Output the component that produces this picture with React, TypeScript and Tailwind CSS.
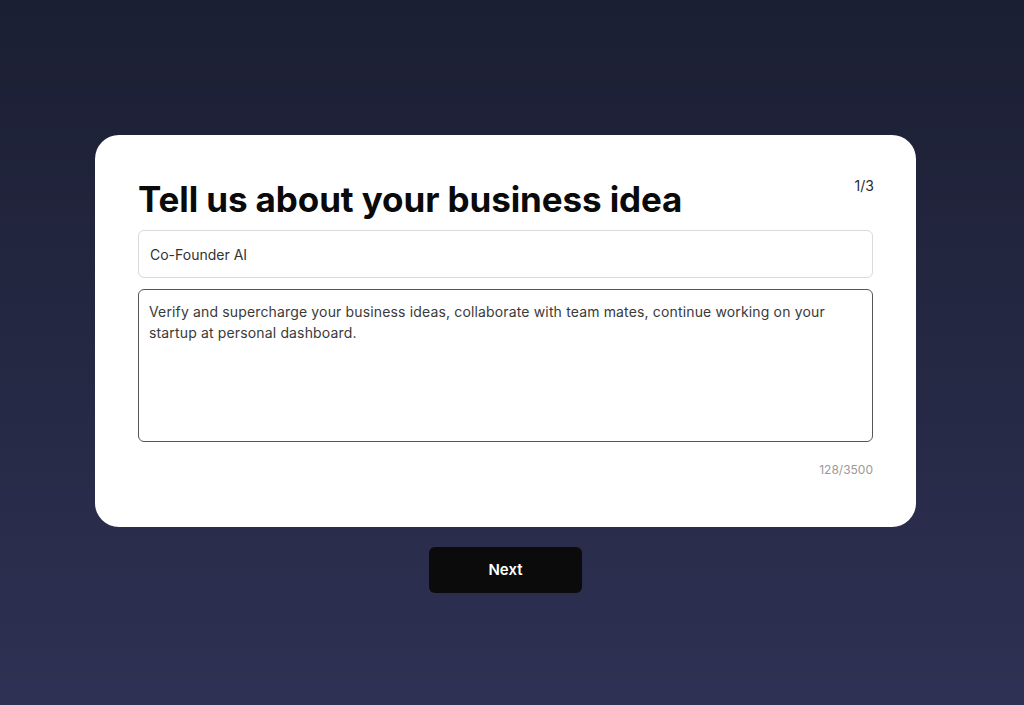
import { useState } from "react";

const font = { fontFamily: "Inter, 'Noto Sans', sans-serif" };

export default function App() {
  const [name, setName] = useState("Co-Founder AI");
  const [desc, setDesc] = useState(
    "Verify and supercharge your business ideas, collaborate with team mates, continue working on your startup at personal dashboard."
  );

  return (
    <div
      style={font}
      className="flex min-h-[705px] w-full flex-col items-center bg-gradient-to-b from-[#1b1f33] to-[#2e3153] pr-[13px] pt-[135px]"
    >
      <div className="w-[821px] rounded-[24px] bg-white px-[43px] pb-[48px] pt-[40px]">
        <div className="flex items-start justify-between">
          <h1 className="text-[35px] font-bold leading-[48px] tracking-[-0.1px] text-[#0a0a0a]">
            Tell us about your business idea
          </h1>
          <span className="mr-[-1px] text-[14px] text-[#2a2a2a]">1/3</span>
        </div>
        <input
          value={name}
          onChange={(e) => setName(e.target.value)}
          className="mt-[7px] block h-[48px] w-full rounded-[6px] border border-[#d9d9d9] px-[11px] text-[14px] text-[#333] outline-none"
        />
        <textarea
          value={desc}
          onChange={(e) => setDesc(e.target.value)}
          className="mt-[11px] block h-[153px] w-full resize-none rounded-[6px] border border-[#555] px-[10px] py-[11px] text-[14px] leading-[21px] tracking-[0.15px] text-[#3a3a3a] outline-none"
        />
        <div className="mt-[19px] text-right text-[12px] text-[#999]">128/3500</div>
      </div>
      <button className="mt-[20px] h-[46px] w-[153px] rounded-[6px] bg-[#0b0b0b] text-[15px] font-semibold text-white">
        Next
      </button>
    </div>
  );
}
